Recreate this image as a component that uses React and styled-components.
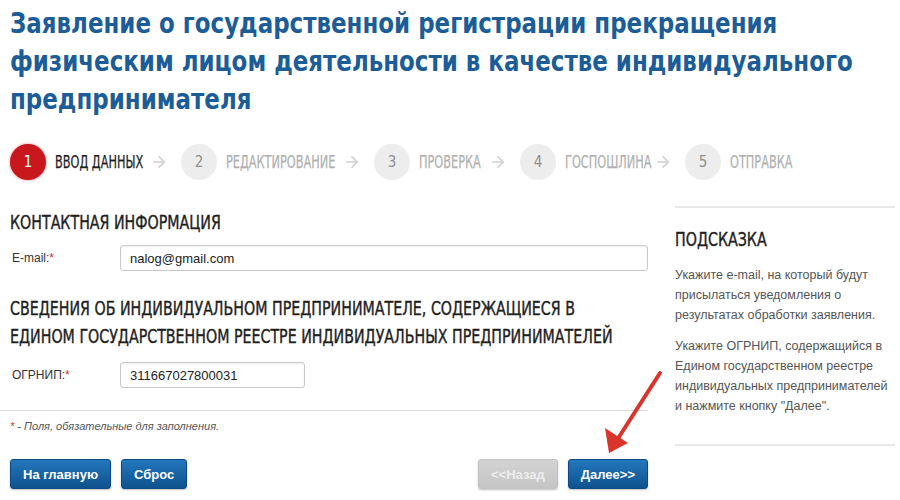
import React from 'react';
import styled, { createGlobalStyle } from 'styled-components';
import { ArrowRight } from 'lucide-react';

const COND = `"DejaVu Sans Condensed", "DejaVu Sans", sans-serif`;

const Global = createGlobalStyle`
  html, body { margin: 0; padding: 0; background: #fff; }
  body { font-family: "Liberation Sans", Arial, sans-serif; }
  * { box-sizing: border-box; }
`;

const Page = styled.div`
  position: relative;
  width: 900px;
  height: 500px;
  overflow: hidden;
  background: #fff;
`;

const TitleWrap = styled.div`
  padding: 4px 10px 0;
`;

const Title = styled.h1`
  margin: 0;
  width: 970px;
  transform: scaleX(0.88);
  transform-origin: left top;
  font-family: ${COND};
  font-weight: 700;
  font-size: 29px;
  line-height: 38px;
  color: #1c5d97;
`;

const Steps = styled.nav`
  display: flex;
  align-items: center;
  padding-left: 10px;
  margin-top: 26px;
  height: 36px;
`;

const Step = styled.div`
  display: flex;
  align-items: center;
  gap: 9px;
`;

const Circle = styled.span`
  width: 36px;
  height: 36px;
  border-radius: 50%;
  display: flex;
  align-items: center;
  justify-content: center;
  font-family: ${COND};
  font-size: 15px;
  background: ${p => (p.$active ? '#c9171e' : '#ededed')};
  color: ${p => (p.$active ? '#fff' : '#8f8f8f')};
  box-shadow: ${p => (p.$active ? '0 0 3px rgba(201,23,30,0.55)' : 'none')};
`;

const StepLabel = styled.span`
  display: inline-block;
  width: ${p => p.$w}px;
  white-space: nowrap;
  transform: scaleX(0.74);
  transform-origin: left center;
  font-family: ${COND};
  font-size: 17px;
  text-transform: uppercase;
  color: ${p => (p.$active ? '#1e1e1e' : '#b0b0b0')};
  -webkit-text-stroke: 0.25px ${p => (p.$active ? '#1e1e1e' : '#b0b0b0')};
`;

const StepArrow = styled.span`
  display: flex;
  margin: 0 13px 0 7px;
  color: #d0d0d0;
`;

const Content = styled.div`
  display: flex;
  gap: 27px;
  margin-top: 20px;
`;

const Main = styled.div`
  width: 648px;
  padding: 8px 0 0 10px;
`;

const SectionTitle = styled.h2`
  margin: ${p => p.$margin || '0'};
  width: ${p => p.$w || 795}px;
  transform: scaleX(0.79);
  transform-origin: left top;
  font-family: ${COND};
  font-weight: 400;
  font-size: 20px;
  line-height: 28px;
  text-transform: uppercase;
  color: #1e1e1e;
  -webkit-text-stroke: 0.4px #1e1e1e;
`;

const FormRow = styled.div`
  display: flex;
  align-items: center;
  margin: ${p => p.$margin || '0'};
`;

const Label = styled.label`
  width: 110px;
  padding-left: 2px;
  font-size: 12px;
  color: #333;
`;

const Req = styled.span`
  color: #d2342b;
`;

const Input = styled.input`
  height: 26px;
  width: ${p => p.$width};
  border: 1px solid #c9c9c9;
  border-radius: 3px;
  padding: 0 9px;
  font-family: "Liberation Sans", Arial, sans-serif;
  font-size: 13px;
  color: #222;
  box-shadow: inset 0 1px 2px rgba(0,0,0,0.08);
  outline: none;
`;

const Divider = styled.hr`
  margin: 0 0 0 -10px;
  border: 0;
  border-top: 1px solid #d9d9d9;
`;

const Note = styled.p`
  margin: 9px 0 0;
  font-size: 11px;
  font-style: italic;
  color: #555;
`;

const Buttons = styled.div`
  display: flex;
  align-items: center;
  gap: 10px;
  margin-top: 27px;
`;

const Spacer = styled.div`
  flex: 1;
`;

const Button = styled.button`
  height: 30px;
  padding: 0 12px;
  border-radius: 3px;
  border: 1px solid ${p => (p.$disabled ? '#c2c2c2' : '#0d4a84')};
  background: ${p => (p.$disabled
    ? 'linear-gradient(#d3d3d3, #c5c5c5)'
    : 'linear-gradient(#2377bd, #0e528d)')};
  color: ${p => (p.$disabled ? '#ededed' : '#fff')};
  font-family: "Liberation Sans", Arial, sans-serif;
  font-weight: 700;
  font-size: 13px;
  box-shadow: 0 1px 2px rgba(0,0,0,0.25);
`;

const Sidebar = styled.aside`
  width: 220px;
  margin-top: 6px;
  border-top: 2px solid #e8e8e8;
  display: flex;
  flex-direction: column;
`;

const HintText = styled.p`
  margin: ${p => p.$margin || '0'};
  font-size: 12.5px;
  line-height: 20px;
  color: #555;
`;

const HintEnd = styled.div`
  margin-top: 28px;
  border-top: 2px solid #e8e8e8;
`;

const Annotation = styled.svg`
  position: absolute;
  left: 0;
  top: 0;
  pointer-events: none;
`;

const steps = [
  { name: 'Ввод данных', w: 88 },
  { name: 'Редактирование', w: 110 },
  { name: 'Проверка', w: 63 },
  { name: 'Госпошлина', w: 82 },
  { name: 'Отправка', w: 60 },
];

export default function App() {
  return (
    <Page>
      <Global />
      <TitleWrap>
        <Title>
          Заявление о государственной регистрации прекращения физическим лицом деятельности в качестве индивидуального предпринимателя
        </Title>
      </TitleWrap>
      <Steps>
        {steps.map((s, i) => (
          <React.Fragment key={s.name}>
            <Step>
              <Circle $active={i === 0}>{i + 1}</Circle>
              <StepLabel $active={i === 0} $w={s.w}>{s.name}</StepLabel>
            </Step>
            {i < steps.length - 1 && (
              <StepArrow><ArrowRight size={18} strokeWidth={2.25} /></StepArrow>
            )}
          </React.Fragment>
        ))}
      </Steps>
      <Content>
        <Main>
          <SectionTitle>Контактная информация</SectionTitle>
          <FormRow $margin="9px 0 0">
            <Label>E-mail:<Req>*</Req></Label>
            <Input $width="528px" defaultValue="nalog@gmail.com" />
          </FormRow>
          <SectionTitle $margin="23px 0 0">
            Сведения об индивидуальном предпринимателе, содержащиеся в едином государственном реестре индивидуальных предпринимателей
          </SectionTitle>
          <FormRow $margin="12px 0 22px">
            <Label>ОГРНИП:<Req>*</Req></Label>
            <Input $width="185px" defaultValue="311667027800031" />
          </FormRow>
          <Divider />
          <Note><Req>*</Req> - Поля, обязательные для заполнения.</Note>
          <Buttons>
            <Button>На главную</Button>
            <Button>Сброс</Button>
            <Spacer />
            <Button $disabled>&lt;&lt;Назад</Button>
            <Button>Далее&gt;&gt;</Button>
          </Buttons>
        </Main>
        <Sidebar>
          <SectionTitle $w={260} $margin="17px 0 0">Подсказка</SectionTitle>
          <HintText $margin="12px 0 0">
            Укажите e-mail, на который будут присылаться уведомления о результатах обработки заявления.
          </HintText>
          <HintText $margin="11px 0 0">
            Укажите ОГРНИП, содержащийся в Едином государственном реестре индивидуальных предпринимателей и нажмите кнопку "Далее".
          </HintText>
          <HintEnd />
        </Sidebar>
      </Content>
      <Annotation width="900" height="500" viewBox="0 0 900 500">
        <line x1="660" y1="373" x2="617" y2="440" stroke="#d9352c" strokeWidth="4" strokeLinecap="round" />
        <polygon points="609,453 605,428 628,443" fill="#d9352c" />
      </Annotation>
    </Page>
  );
}
